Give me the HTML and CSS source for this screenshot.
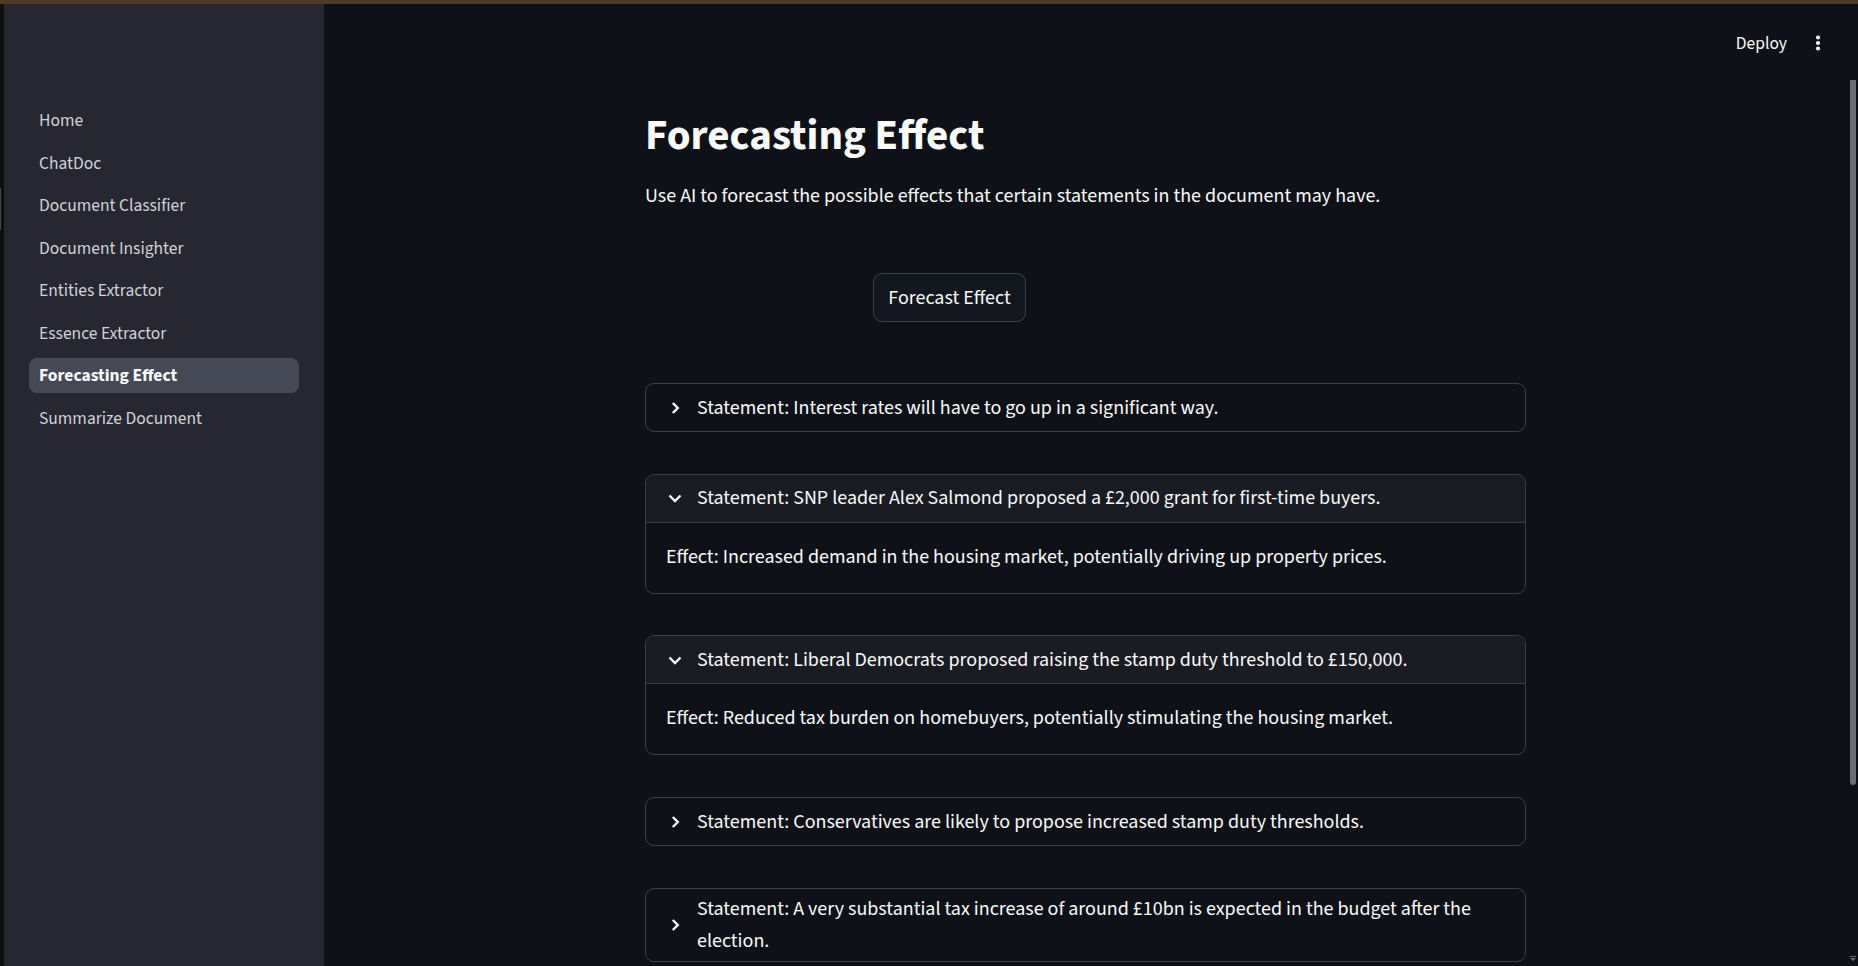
FILE: index.html
```html
<!DOCTYPE html>
<html lang="en">
<head>
<meta charset="utf-8">
<title>Forecasting Effect</title>
<link rel="stylesheet" href="styles.css">
</head>
<body>
<div class="topbar"></div>
<div class="app">
  <div class="edge"><div class="edge-mark"></div></div>
  <aside class="sidebar">
    <nav class="nav">
      <a class="nav-item">Home</a>
      <a class="nav-item">ChatDoc</a>
      <a class="nav-item">Document Classifier</a>
      <a class="nav-item">Document Insighter</a>
      <a class="nav-item">Entities Extractor</a>
      <a class="nav-item">Essence Extractor</a>
      <a class="nav-item active">Forecasting Effect</a>
      <a class="nav-item">Summarize Document</a>
    </nav>
  </aside>
  <main class="main">
    <header class="header">
      <span class="deploy">Deploy</span>
      <span class="menu">
        <svg width="22" height="22" viewBox="0 0 22 22"><circle cx="11" cy="5.5" r="2.1" fill="#fafafa"/><circle cx="11" cy="11" r="2.1" fill="#fafafa"/><circle cx="11" cy="16.5" r="2.1" fill="#fafafa"/></svg>
      </span>
    </header>
    <section class="content">
      <h1 class="title">Forecasting Effect</h1>
      <p class="lead">Use AI to forecast the possible effects that certain statements in the document may have.</p>
      <div class="button-row"><button class="btn">Forecast Effect</button></div>

      <div class="expander">
        <div class="exp-head">
          <svg class="chev" width="20" height="20" viewBox="0 0 20 20"><path d="M7.8 5 L12.8 10 L7.8 15" fill="none" stroke="#fafafa" stroke-width="2.4"/></svg>
          <span class="exp-title">Statement: Interest rates will have to go up in a significant way.</span>
        </div>
      </div>

      <div class="expander open">
        <div class="exp-head">
          <svg class="chev" width="20" height="20" viewBox="0 0 20 20"><path d="M4.5 7.5 L10 13 L15.5 7.5" fill="none" stroke="#fafafa" stroke-width="2.4"/></svg>
          <span class="exp-title">Statement: SNP leader Alex Salmond proposed a £2,000 grant for first-time buyers.</span>
        </div>
        <div class="exp-body">Effect: Increased demand in the housing market, potentially driving up property prices.</div>
      </div>

      <div class="expander open">
        <div class="exp-head">
          <svg class="chev" width="20" height="20" viewBox="0 0 20 20"><path d="M4.5 7.5 L10 13 L15.5 7.5" fill="none" stroke="#fafafa" stroke-width="2.4"/></svg>
          <span class="exp-title">Statement: Liberal Democrats proposed raising the stamp duty threshold to £150,000.</span>
        </div>
        <div class="exp-body">Effect: Reduced tax burden on homebuyers, potentially stimulating the housing market.</div>
      </div>

      <div class="expander">
        <div class="exp-head">
          <svg class="chev" width="20" height="20" viewBox="0 0 20 20"><path d="M7.8 5 L12.8 10 L7.8 15" fill="none" stroke="#fafafa" stroke-width="2.4"/></svg>
          <span class="exp-title">Statement: Conservatives are likely to propose increased stamp duty thresholds.</span>
        </div>
      </div>

      <div class="expander">
        <div class="exp-head">
          <svg class="chev" width="20" height="20" viewBox="0 0 20 20"><path d="M7.8 5 L12.8 10 L7.8 15" fill="none" stroke="#fafafa" stroke-width="2.4"/></svg>
          <span class="exp-title">Statement: A very substantial tax increase of around £10bn is expected in the budget after the election.</span>
        </div>
      </div>
    </section>
    <div class="scroll-thumb"></div>
    <div class="scroll-arrow"></div>
  </main>
</div>
</body>
</html>
```
FILE: styles.css
```css
* { box-sizing: border-box; }

html, body {
  margin: 0;
  height: 100%;
  overflow: hidden;
}

body {
  background: #0e1117;
  color: #fafafa;
  font-family: "Source Sans Pro", "Source Sans 3", Lato, "Liberation Sans", sans-serif;
}

.topbar {
  height: 4px;
  background: #4e3a27;
}

.app {
  display: flex;
  height: 962px;
}

.edge {
  width: 4px;
  flex: none;
  background: #0f0f10;
  padding-top: 184px;
}

.edge-mark {
  width: 1px;
  height: 42px;
  background: #4a4a4c;
}

.sidebar {
  width: 320px;
  flex: none;
  background: #262730;
  padding: 99px 25px 0;
}

.nav {
  display: flex;
  flex-direction: column;
  gap: 7.5px;
}

.nav-item {
  display: flex;
  align-items: center;
  height: 35px;
  padding-left: 10px;
  border-radius: 8px;
  font-size: 17.5px;
  color: #d2d3d8;
  text-decoration: none;
}

.nav-item.active {
  background: #454855;
  color: #fafafa;
  font-weight: 700;
}

.main {
  flex: 1;
  position: relative;
  overflow: hidden;
}

.header {
  height: 78px;
  display: flex;
  align-items: center;
  justify-content: flex-end;
  padding-right: 28px;
  gap: 19px;
}

.deploy {
  font-size: 17.5px;
  color: #fafafa;
}

.menu {
  display: flex;
  width: 24px;
  height: 24px;
  align-items: center;
  justify-content: center;
}

.content {
  margin-left: 321px;
  width: 881px;
  padding-top: 28px;
}

.title {
  margin: 0;
  font-size: 43px;
  line-height: 52px;
  font-weight: 700;
}

.lead {
  margin: 20px 0 0;
  font-size: 20px;
  line-height: 29px;
}

.button-row {
  margin-top: 62px;
  padding-left: 228px;
}

.btn {
  height: 49px;
  width: 153px;
  border: 1px solid #3d4046;
  border-radius: 9px;
  background: #131720;
  color: #fafafa;
  font-family: inherit;
  font-size: 20px;
  padding: 0;
}

.expander {
  border: 1px solid #3c3e45;
  border-radius: 9px;
  overflow: hidden;
  margin-bottom: 41.7px;
}

.button-row + .expander {
  margin-top: 61px;
}

.exp-head {
  display: flex;
  align-items: center;
  min-height: 47px;
  padding: 4px 20px 4px 19px;
  font-size: 20px;
  line-height: 32px;
}

.expander.open .exp-head {
  background: #1a1c24;
}

.chev {
  flex: none;
  margin-right: 12px;
}

.exp-body {
  border-top: 1px solid #3c3e45;
  padding: 19px 20px 20px;
  font-size: 20px;
  line-height: 31px;
}

.scroll-thumb {
  position: absolute;
  top: 76px;
  right: 2px;
  width: 6px;
  height: 705px;
  background: #6c6d72;
  border-radius: 0 0 3px 3px;
}

.scroll-arrow {
  position: absolute;
  right: 2px;
  bottom: 6px;
  width: 6px;
  height: 4px;
  border-top: 1px solid #6c6d72;
}

.scroll-arrow::after {
  content: "";
  position: absolute;
  left: 0;
  top: 1px;
  border-left: 3px solid transparent;
  border-right: 3px solid transparent;
  border-top: 3px solid #6c6d72;
}
```
